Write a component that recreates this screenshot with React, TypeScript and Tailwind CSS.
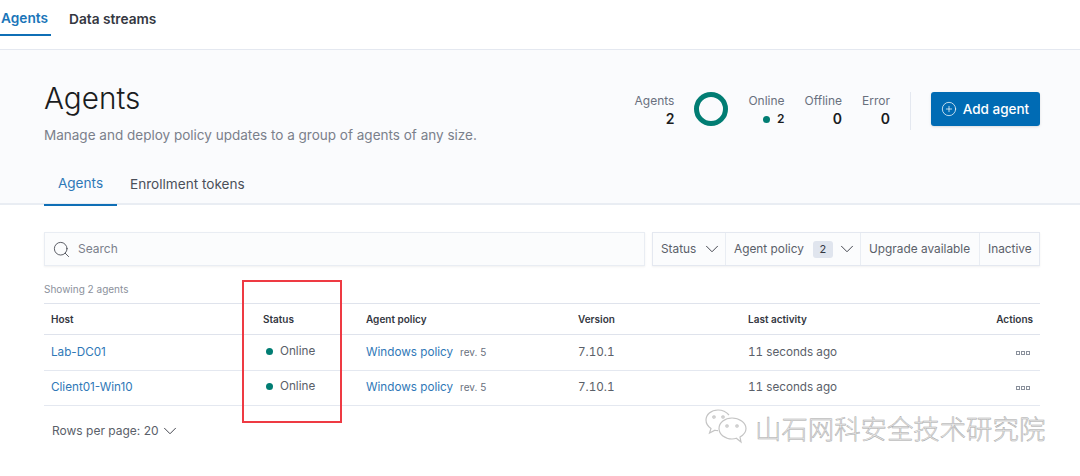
import { ChevronDown, CirclePlus, Search } from "lucide-react";

const AGENTS = [
  { host: "Lab-DC01" },
  { host: "Client01-Win10" },
];

function Stat({ label, value, dot }: { label: string; value: string; dot?: boolean }) {
  return (
    <div className="flex flex-col items-end">
      <span className="pt-[1px] text-[12px] leading-[16px] text-[#69707d]">{label}</span>
      <span className={`flex items-center leading-[20px] text-[#1a1c21] font-semibold ${dot ? "text-[12px]" : "text-[14px]"}`}>
        {dot && <span className="mr-[7px] h-[7px] w-[7px] rounded-full bg-[#017d73]" />}
        {value}
      </span>
    </div>
  );
}

function WatermarkIcon() {
  return (
    <svg width="42" height="38" viewBox="0 0 42 38" fill="none" stroke="#c4c4c4" strokeWidth="1.2" className="shrink-0">
      <path d="M24 6C21 2.500 17 1 13 1 6 1 1 5.500 1 11c0 3.500 2 6.500 5 8.500L4.500 24l5.500-2.800c1 .3 2 .4 3 .5" />
      <path d="M27 9c-7 0-13 4.500-13 10.500S20 30 27 30c1.500 0 3-.2 4.300-.7L36 33l-1-5c3.500-2 6-5 6-8.500C41 13.500 34 9 27 9z" />
      <circle cx="9" cy="8" r="1.200" />
      <circle cx="18" cy="8" r="1.200" />
      <circle cx="22" cy="17" r="1.200" />
      <circle cx="32" cy="17" r="1.200" />
    </svg>
  );
}

export default function App() {
  return (
    <div className="relative h-[476px] w-[1080px] overflow-hidden bg-white font-['Inter',sans-serif] text-[14px] text-[#343741]">
      {/* Top tabs */}
      <div className="flex h-[50px] items-start gap-[18px] border-b border-[#e4e8f0] text-[13.700px]">
        <div className="flex h-[36px] w-[51px] items-center border-b-2 border-[#0f6fb6] pl-[1px] pt-[2px] font-semibold text-[#1a75b9]">
          Agents
        </div>
        <div className="flex h-[36px] items-center pt-[2px] font-semibold text-[#343741]">Data streams</div>
      </div>

      {/* Page header */}
      <div className="h-[155px] border-b-2 border-[#e9edf3] bg-[#fafbfd] pl-[44px] pr-[40px]">
        <div className="flex items-start justify-between">
          <div className="pt-[28px]">
            <h1 className="text-[29.700px] font-light leading-[40px] text-[#1a1c21]">Agents</h1>
            <p className="mt-[7px] text-[13.530px] leading-[20px] text-[#7a808b]">
              Manage and deploy policy updates to a group of agents of any size.
            </p>
          </div>
          <div className="flex items-start pt-[42px]">
            <Stat label="Agents" value="2" />
            <div className="ml-[20px] mr-[20px] h-[34px] w-[34px] rounded-full border-[5px] border-[#017d73]" />
            <Stat label="Online" value="2" dot />
            <div className="w-[20px]" />
            <Stat label="Offline" value="0" />
            <div className="w-[20px]" />
            <Stat label="Error" value="0" />
            <div className="mx-[20px] h-[38px] w-px bg-[#e4e8f0]" />
            <button className="flex h-[34px] w-[109px] items-center justify-center gap-[6px] rounded-[3px] bg-[#006bb4] pr-[1px] text-[13.500px] font-medium text-white shadow-sm">
              <CirclePlus size={16} strokeWidth={1.100} />
              Add agent
            </button>
          </div>
        </div>
        <div className="mt-[18px] flex items-start gap-[13px] text-[13.600px]">
          <div className="flex h-[43px] w-[73px] items-center justify-center border-b-2 border-[#0f6fb6] text-[#2f78b7]">
            Agents
          </div>
          <div className="flex h-[43px] items-center text-[#4a4f59]">Enrollment tokens</div>
        </div>
      </div>

      {/* Search and filters */}
      <div className="ml-[44px] mr-[40px] mt-[27px] flex gap-[7px]">
        <div className="flex h-[34px] w-[601px] items-center gap-[7px] border border-[#e9edf3] bg-[#fbfcfd] pl-[7px] text-[12px] text-[#7a808b] shadow-[0_1px_2px_rgba(0,0,0,0.06)]">
          <Search size={19} strokeWidth={1} className="text-[#343741]" />
          Search
        </div>
        <div className="flex h-[34px] flex-1 items-center divide-x divide-[#e9edf3] border border-[#e4e8f0] bg-[#fbfcfd] text-[11.850px] text-[#5a6069] shadow-[0_1px_2px_rgba(0,0,0,0.06)]">
          <div className="flex h-full w-[73px] items-center justify-between pl-[8px] pr-[2px]">
            <span className="pt-[1px]">Status</span>
            <ChevronDown size={22} strokeWidth={1} className="text-[#343741]" />
          </div>
          <div className="flex h-full w-[135px] items-center pl-[8px] pr-[2px]">
            <span className="pt-[1px]">Agent policy</span>
            <span className="ml-[9px] flex h-[17px] w-[20px] items-center justify-center rounded-[3px] bg-[#e0e5ee] text-[11px] text-[#343741]">2</span>
            <ChevronDown size={22} strokeWidth={1} className="ml-auto text-[#343741]" />
          </div>
          <div className="flex h-full w-[119px] items-center pl-[8px] pt-[1px]">Upgrade available</div>
          <div className="flex h-full flex-1 items-center pl-[8px] pt-[1px]">Inactive</div>
        </div>
      </div>

      {/* Table */}
      <div className="ml-[44px] mr-[40px] mt-[16px]">
        <div className="h-[21px] text-[10px] leading-[15px] text-[#8b919c]">Showing 2 agents</div>
        <table className="w-full table-fixed border-collapse">
          <thead>
            <tr className="h-[31px] border-y border-[#dfe3ec] text-left text-[10px] text-[#343741]">
              <th className="w-[212px] pl-[7px] font-semibold">Host</th>
              <th className="w-[110px] pl-[7px] font-semibold">Status</th>
              <th className="w-[212px] font-semibold">Agent policy</th>
              <th className="w-[170px] font-semibold">Version</th>
              <th className="font-semibold">Last activity</th>
              <th className="w-[100px] pr-[7px] text-right font-semibold">Actions</th>
            </tr>
          </thead>
          <tbody className="text-[11.700px] text-[#5a6069]">
            {AGENTS.map((a, i) => (
              <tr key={a.host} className={`border-b border-[#e4e8f0] ${i === 0 ? "h-[36px]" : "h-[35px]"}`}>
                <td className="pl-[7px] text-[#2f78b7]">{a.host}</td>
                <td className="pl-[7px]">
                  <div className="-mt-[2px] flex items-center gap-[7px] pl-[3px]">
                    <span className="h-[7px] w-[7px] rounded-full bg-[#017d73]" />
                    Online
                  </div>
                </td>
                <td>
                  <span className="text-[#2f78b7]">Windows policy</span>
                  <span className="ml-[7px] text-[10px] text-[#69707d]">rev. 5</span>
                </td>
                <td className="tabular-nums">7.10.1</td>
                <td className="tabular-nums">11 seconds ago</td>
                <td className="pr-[10px]">
                  <div className="flex justify-end gap-[1px]">
                    <span className="h-[4px] w-[4px] border border-[#8b919c]" />
                    <span className="h-[4px] w-[4px] border border-[#8b919c]" />
                    <span className="h-[4px] w-[4px] border border-[#8b919c]" />
                  </div>
                </td>
              </tr>
            ))}
          </tbody>
        </table>
        <div className="mt-[14px] flex items-center pl-[8px] text-[12px] text-[#5a6069]">
          <span>Rows per page: 20</span>
          <ChevronDown size={22} strokeWidth={1} className="text-[#343741]" />
        </div>
      </div>

      {/* Highlight box */}
      <div className="absolute left-[242px] top-[280px] h-[143px] w-[100px] border-2 border-[#ee3a43]" />

      {/* Watermark */}
      <div className="absolute left-[705px] top-[409px] flex items-center gap-[8px]">
        <WatermarkIcon />
        <span className="font-['Noto_Sans_CJK_SC',sans-serif] text-[26.400px] font-light leading-[36px] text-[#ececec] [-webkit-text-stroke:0.5px_#a8a8a8]">
          山石网科安全技术研究院
        </span>
      </div>
    </div>
  );
}
